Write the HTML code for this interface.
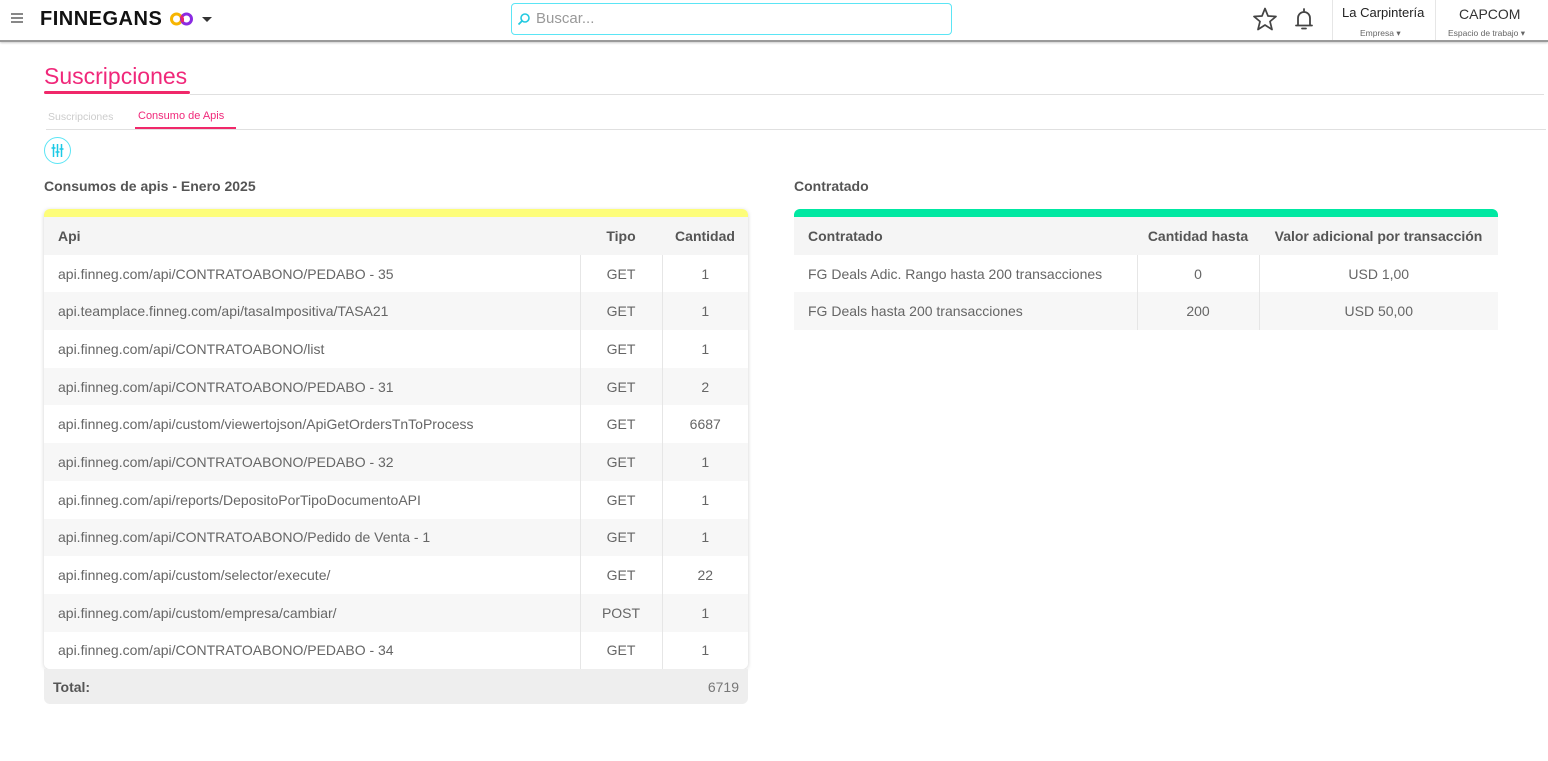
<!DOCTYPE html>
<html><head><meta charset="utf-8">
<style>
*{box-sizing:border-box;margin:0;padding:0}
body{width:1548px;height:761px;background:#fff;font-family:"Liberation Sans",sans-serif;color:#555;position:relative;overflow:hidden}
.abs{position:absolute}
.hdr{left:0;top:0;width:1548px;height:42px;background:#fff;border-bottom:2px solid #9a9a9a;box-shadow:0 1px 2px #ccc}
table{border-collapse:collapse;width:100%;font-size:14px}
td,th{height:37.7px;padding:0 14px;white-space:nowrap}
th{font-weight:bold;color:#555;text-align:left;background:#f5f5f5}
td{color:#666;border-right:1px solid #e6e6e6;background:#fff}
td:last-child{border-right:none}
tr:nth-child(odd) td{background:#f7f7f7}
.c{text-align:center}
</style></head><body>
<div class="abs hdr">
  <div class="abs" style="left:11px;top:13px;width:12px;height:1.5px;background:#888;box-shadow:0 4px 0 #888,0 8px 0 #888"></div>
  <div class="abs" style="left:40px;top:8px;font-size:20px;font-weight:bold;color:#111;letter-spacing:0.5px">FINNEGANS</div>
  <svg class="abs" style="left:169px;top:11px" width="26" height="16" viewBox="0 0 26 16"><circle cx="7.5" cy="8" r="5" fill="none" stroke="#f7b500" stroke-width="3"/><circle cx="17.5" cy="8" r="5" fill="none" stroke="#8a2be2" stroke-width="3"/><path d="M12 5 A5 5 0 0 1 13 11" stroke="#e8236e" stroke-width="3" fill="none"/></svg>
  <div class="abs" style="left:202px;top:17px;border:5px solid transparent;border-top:5px solid #333;border-bottom:none"></div>
  <div class="abs" style="left:511px;top:3px;width:441px;height:32px;border:1px solid #5be5f5;border-radius:4px"></div>
  <svg class="abs" style="left:517px;top:12px" width="14" height="14" viewBox="0 0 14 14"><circle cx="8" cy="6" r="4" fill="none" stroke="#22c9e0" stroke-width="1.6"/><path d="M5 9 L1.5 12.5" stroke="#22c9e0" stroke-width="1.8"/></svg>
  <div class="abs" style="left:536px;top:10px;font-size:15px;color:#999">Buscar...</div>
  <svg class="abs" style="left:1252px;top:7px" width="26" height="24" viewBox="0 0 26 24"><path d="M13 1.5 L16 9 L24 9.5 L18 14.5 L20 22.5 L13 18 L6 22.5 L8 14.5 L2 9.5 L10 9 Z" fill="none" stroke="#444" stroke-width="1.7" stroke-linejoin="round"/></svg>
  <svg class="abs" style="left:1293px;top:7px" width="22" height="25" viewBox="0 0 22 25"><path d="M11 2 V4 M5 18 V11 A6 6 0 0 1 17 11 V18 M3 18.5 H19 M9 21.5 H13" fill="none" stroke="#444" stroke-width="1.8" stroke-linecap="round"/></svg>
  <div class="abs" style="left:1332px;top:0;width:1px;height:40px;background:#e6e6e6"></div>
  <div class="abs" style="left:1435px;top:0;width:1px;height:40px;background:#e6e6e6"></div>
  <div class="abs" style="left:1342px;top:5px;font-size:13px;color:#222">La Carpintería</div>
  <div class="abs" style="left:1360px;top:28px;font-size:8.5px;color:#666">Empresa ▾</div>
  <div class="abs" style="left:1459px;top:6px;font-size:14px;color:#333">CAPCOM</div>
  <div class="abs" style="left:1448px;top:28px;font-size:8.5px;color:#666">Espacio de trabajo ▾</div>
</div>
<div class="abs" style="left:44px;top:63px;font-size:23px;color:#f0287a">Suscripciones</div>
<div class="abs" style="left:44px;top:91px;width:146px;height:3px;background:#f0286a;border-radius:2px"></div>
<div class="abs" style="left:190px;top:94px;width:1354px;height:1px;background:#e0e0e0"></div>
<div class="abs" style="left:48px;top:111px;font-size:10.5px;color:#ccc">Suscripciones</div>
<div class="abs" style="left:138px;top:110px;font-size:11px;color:#f0287a">Consumo de Apis</div>
<div class="abs" style="left:135px;top:127px;width:101px;height:3px;background:#f0286a"></div>
<div class="abs" style="left:46px;top:129px;width:1500px;height:1px;background:#e0e0e0"></div>
<div class="abs" style="left:44px;top:137px;width:27px;height:27px;border:1px solid #5be5f5;border-radius:50%"></div>
<svg class="abs" style="left:51px;top:144px" width="13" height="13" viewBox="0 0 13 13"><path d="M2.5 0 V13 M6.5 0 V13 M10.5 0 V13 M0.5 4 H4.5 M4.5 8 H8.5 M8.5 5 H12.5" stroke="#1cc9e6" stroke-width="1.5"/></svg>
<div class="abs" style="left:44px;top:178px;font-size:14px;font-weight:bold;color:#555">Consumos de apis - Enero 2025</div>
<div class="abs" style="left:794px;top:178px;font-size:14px;font-weight:bold;color:#555">Contratado</div>

<div class="abs" style="left:44px;top:209px;width:704px;border-radius:6px;overflow:hidden;box-shadow:0 1px 4px rgba(0,0,0,.18);border-top:8px solid #fdfd7a">
<table>
<tr><th>Api</th><th style="width:82px;text-align:center">Tipo</th><th style="width:86px;text-align:center;padding:0 8px">Cantidad</th></tr>
<tr><td>api.finneg.com/api/CONTRATOABONO/PEDABO - 35</td><td class="c">GET</td><td class="c">1</td></tr>
<tr><td>api.teamplace.finneg.com/api/tasaImpositiva/TASA21</td><td class="c">GET</td><td class="c">1</td></tr>
<tr><td>api.finneg.com/api/CONTRATOABONO/list</td><td class="c">GET</td><td class="c">1</td></tr>
<tr><td>api.finneg.com/api/CONTRATOABONO/PEDABO - 31</td><td class="c">GET</td><td class="c">2</td></tr>
<tr><td>api.finneg.com/api/custom/viewertojson/ApiGetOrdersTnToProcess</td><td class="c">GET</td><td class="c">6687</td></tr>
<tr><td>api.finneg.com/api/CONTRATOABONO/PEDABO - 32</td><td class="c">GET</td><td class="c">1</td></tr>
<tr><td>api.finneg.com/api/reports/DepositoPorTipoDocumentoAPI</td><td class="c">GET</td><td class="c">1</td></tr>
<tr><td>api.finneg.com/api/CONTRATOABONO/Pedido de Venta - 1</td><td class="c">GET</td><td class="c">1</td></tr>
<tr><td>api.finneg.com/api/custom/selector/execute/</td><td class="c">GET</td><td class="c">22</td></tr>
<tr><td>api.finneg.com/api/custom/empresa/cambiar/</td><td class="c">POST</td><td class="c">1</td></tr>
<tr><td>api.finneg.com/api/CONTRATOABONO/PEDABO - 34</td><td class="c">GET</td><td class="c">1</td></tr>
</table></div>
<div class="abs" style="left:44px;top:669px;width:704px;height:35px;background:#eee;border-radius:0 0 6px 6px;font-size:14px">
<span class="abs" style="left:9px;top:10px;font-weight:bold;color:#555">Total:</span>
<span class="abs" style="right:9px;top:10px;color:#777">6719</span></div>

<div class="abs" style="left:794px;top:209px;width:704px;border-radius:6px 6px 0 0;overflow:hidden;border-top:8px solid #00e8a2">
<table>
<tr><th>Contratado</th><th style="width:122px;text-align:center;padding:0 6px">Cantidad hasta</th><th style="width:239px;text-align:center;padding:0 6px">Valor adicional por transacción</th></tr>
<tr><td>FG Deals Adic. Rango hasta 200 transacciones</td><td class="c">0</td><td class="c">USD 1,00</td></tr>
<tr><td>FG Deals hasta 200 transacciones</td><td class="c">200</td><td class="c">USD 50,00</td></tr>
</table></div>
</body></html>
